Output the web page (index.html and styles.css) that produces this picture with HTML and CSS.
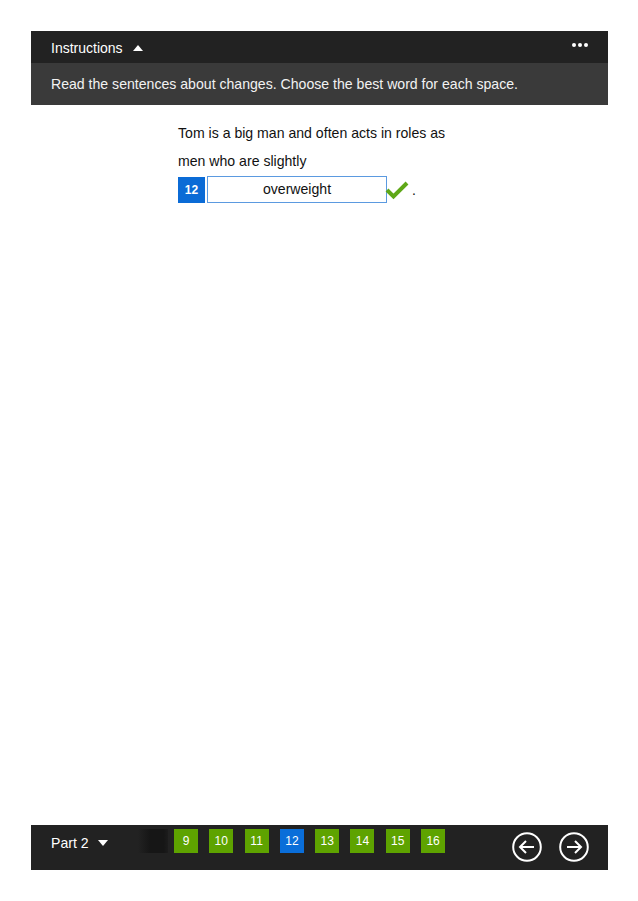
FILE: index.html
```html
<!DOCTYPE html>
<html>
<head>
<meta charset="utf-8">
<link rel="stylesheet" href="styles.css">
</head>
<body>
<div class="page">
  <header class="topbar">
    <div class="title">Instructions <span class="tri-up"></span></div>
    <div class="dots"><span></span><span></span><span></span></div>
  </header>
  <div class="instr">Read the sentences about changes. Choose the best word for each space.</div>
  <main class="content">
    <p class="line">Tom is a big man and often acts in roles as</p>
    <p class="line">men who are slightly</p>
    <div class="answer">
      <span class="qnum">12</span>
      <span class="field">overweight</span>
      <svg class="check" width="24" height="20" viewBox="0 0 24 20"><path d="M2 10 L8.5 16.5 L22 3" fill="none" stroke="#5fa818" stroke-width="4"/></svg>
      <span class="period">.</span>
    </div>
  </main>
  <footer class="footbar">
    <div class="part">Part 2 <span class="tri-down"></span></div>
    <div class="nav">
      <span class="ghost"></span>
      <span class="sq">9</span>
      <span class="sq">10</span>
      <span class="sq">11</span>
      <span class="sq cur">12</span>
      <span class="sq">13</span>
      <span class="sq">14</span>
      <span class="sq">15</span>
      <span class="sq">16</span>
    </div>
    <div class="arrows">
      <svg width="30" height="30" viewBox="0 0 30 30"><circle cx="15" cy="15" r="13.8" fill="none" stroke="#fff" stroke-width="2"/><path d="M22 15 H8 M14 9 L8 15 L14 21" fill="none" stroke="#fff" stroke-width="2"/></svg>
      <svg width="30" height="30" viewBox="0 0 30 30"><circle cx="15" cy="15" r="13.8" fill="none" stroke="#fff" stroke-width="2"/><path d="M8 15 H22 M16 9 L22 15 L16 21" fill="none" stroke="#fff" stroke-width="2"/></svg>
    </div>
  </footer>
</div>
</body>
</html>
```
FILE: styles.css
```css
html, body { margin: 0; padding: 0; background: #fff; }
body { font-family: "Liberation Sans", Arial, sans-serif; }
.page {
  width: 577px;
  height: 839px;
  margin: 0 0 0 31px;
  padding-top: 31px;
  display: flex;
  flex-direction: column;
}
.topbar {
  height: 32px;
  background: #222222;
  display: flex;
  align-items: center;
  justify-content: space-between;
  padding: 0 20px;
  color: #fff;
}
.title { font-size: 14px; display: flex; align-items: center; padding-top: 1px; }
.tri-up {
  display: inline-block;
  width: 0; height: 0;
  border-left: 5px solid transparent;
  border-right: 5px solid transparent;
  border-bottom: 6px solid #fff;
  margin-left: 10px;
}
.dots { display: flex; gap: 2px; margin-bottom: 5px; }
.dots span { width: 4px; height: 4px; background: #fff; border-radius: 50%; }
.instr {
  height: 42px;
  background: #3a3a3a;
  color: #f2f2f2;
  font-size: 14.1px;
  padding-left: 20px;
  display: flex;
  align-items: center;
  box-sizing: border-box;
}
.content {
  flex: 1;
  padding: 14px 0 0 147px;
  color: #111;
}
.line { margin: 0; font-size: 14.1px; line-height: 28px; }
.answer { display: flex; align-items: center; margin-top: 1px; }
.qnum {
  width: 27px; height: 26px;
  background: #0b6bd6;
  color: #fff;
  font-size: 12px;
  font-weight: bold;
  display: flex; align-items: center; justify-content: center;
}
.field {
  width: 178px;
  margin-left: 2px;
  border: 1px solid #5b9ae0;
  font-size: 14.1px;
  display: flex; align-items: center; justify-content: center;
  padding-bottom: 2px;
  height: 23px;
}
.check { margin-left: -2px; }
.period { font-size: 14px; margin-left: 3px; }
.footbar {
  height: 45px;
  background: #222222;
  display: flex;
  align-items: flex-start;
  color: #fff;
}
.part {
  width: 87px;
  padding-left: 20px;
  font-size: 14.1px;
  height: 35px;
  display: flex; align-items: center;
}
.tri-down {
  display: inline-block;
  width: 0; height: 0;
  border-left: 5px solid transparent;
  border-right: 5px solid transparent;
  border-top: 6px solid #fff;
  margin-left: 9px;
}
.nav { display: flex; gap: 11.3px; padding-top: 4px; }
.ghost {
  width: 30px; height: 24px;
  background: linear-gradient(to right, #222 0%, #161616 40%, #161616 85%, #1c1c1c 100%);
  margin-right: -5.3px;
}
.sq {
  width: 24px; height: 24px;
  background: #5ea300;
  font-size: 12px;
  display: flex; align-items: center; justify-content: center;
}
.sq.cur { background: #0a6ed9; }
.arrows { margin-left: auto; display: flex; gap: 17px; padding: 7px 19px 0 0; }
```
